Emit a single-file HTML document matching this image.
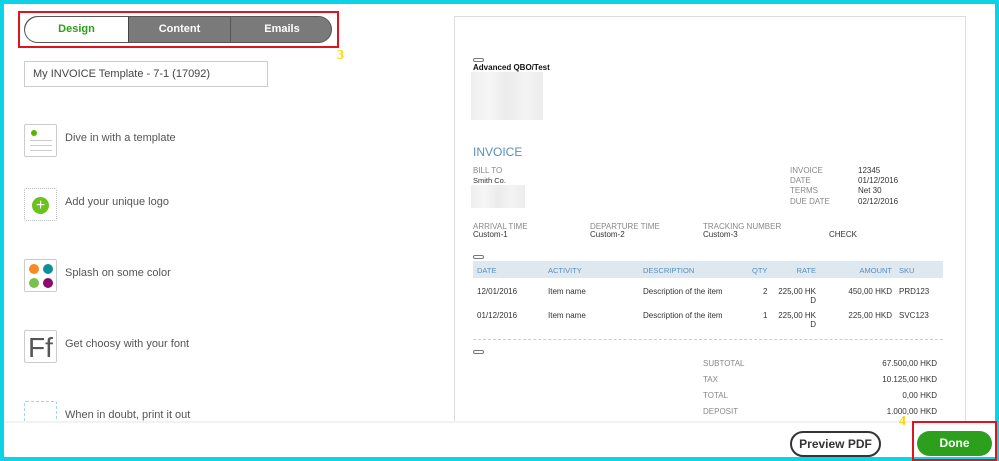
<!DOCTYPE html><html><head><style>
*{margin:0;padding:0;box-sizing:border-box}
body{width:999px;height:461px;position:relative;overflow:hidden;background:#fff;font-family:"Liberation Sans",sans-serif}
.a{position:absolute}
.cy{position:absolute;background:#0dd3e6}
.t{position:absolute;font-size:8px;color:#333;white-space:nowrap;line-height:9px}
.g{color:#888}
.h{position:absolute;font-size:7.5px;color:#5a8fb8;top:266px}
.li{position:absolute;left:65px;font-size:11px;color:#555}
.ic{position:absolute;left:24px;width:33px;height:33px;border:1px solid #ccc;border-radius:2px;background:#fff}
.blur{position:absolute;background:linear-gradient(90deg,#eee,#f6f6f6,#ebebeb,#f4f4f4,#ececec)}
.r{text-align:right}
</style></head><body>
<div class="cy" style="left:0;top:0;width:999px;height:4px"></div>
<div class="cy" style="left:0;top:0;width:4px;height:461px"></div>
<div class="cy" style="left:995px;top:0;width:4px;height:461px"></div>
<div class="cy" style="left:0;top:457px;width:999px;height:4px"></div>

<div class="a" style="left:18px;top:11px;width:321px;height:37px;border:2px solid #e0141e"></div>
<div class="a" style="left:24px;top:16px;width:308px;height:27px;border-radius:14px;border:1px solid #ccc;overflow:hidden;background:#7a7a7a;border-color:#555">
<div class="a" style="left:0;top:0;width:103px;height:27px;background:#fff;color:#2ca01c;font-size:11px;font-weight:bold;text-align:center;line-height:25px;border-radius:14px 0 0 14px">Design</div>
<div class="a" style="left:103px;top:0;width:103px;height:27px;color:#fff;font-size:11px;font-weight:bold;text-align:center;line-height:25px;border-left:1px solid #444;border-right:1px solid #555">Content</div>
<div class="a" style="left:206px;top:0;width:102px;height:27px;color:#fff;font-size:11px;font-weight:bold;text-align:center;line-height:25px">Emails</div>
</div>
<div class="a" style="left:337px;top:48px;color:#ffd400;font-weight:bold;font-size:14px;font-family:'Liberation Serif',serif">3</div>

<div class="a" style="left:24px;top:61px;width:244px;height:26px;border:1px solid #ccc;font-size:11px;color:#444;padding:6px 0 0 8px">My INVOICE Template - 7-1 (17092)</div>

<div class="ic" style="top:124px"><div class="a" style="left:6px;top:5px;width:6px;height:6px;border-radius:50%;background:#53b700"></div><div class="a" style="left:5px;top:15px;width:22px;border-top:1px solid #ccc"></div><div class="a" style="left:5px;top:20px;width:22px;border-top:1px solid #ccc"></div><div class="a" style="left:5px;top:25px;width:22px;border-top:1px solid #ccc"></div></div>
<div class="li" style="top:132px">Dive in with a template</div>
<div class="ic" style="top:188px;border:1px dotted #bbb"><div class="a" style="left:7px;top:8px;width:17px;height:17px;border-radius:50%;background:#6cc21c;color:#fff;font-size:16px;line-height:17px;text-align:center">+</div></div>
<div class="li" style="top:196px">Add your unique logo</div>
<div class="ic" style="top:259px"><div class="a" style="left:4px;top:4px;width:10px;height:10px;border-radius:50%;background:#f68b1f"></div><div class="a" style="left:18px;top:4px;width:10px;height:10px;border-radius:50%;background:#0f8f99"></div><div class="a" style="left:4px;top:18px;width:10px;height:10px;border-radius:50%;background:#7bbf4e"></div><div class="a" style="left:18px;top:18px;width:10px;height:10px;border-radius:50%;background:#8b0a6b"></div></div>
<div class="li" style="top:267px">Splash on some color</div>
<div class="ic" style="top:330px"><div class="a" style="left:3px;top:1px;font-size:28px;color:#555;font-family:'Liberation Sans';line-height:32px">Ff</div></div>
<div class="li" style="top:338px">Get choosy with your font</div>
<div class="ic" style="top:401px;border:1px dashed #9ed6ee;height:22px"></div>
<div class="li" style="top:409px">When in doubt, print it out</div>

<div class="a" style="left:454px;top:16px;width:512px;height:410px;border:1px solid #ddd"></div>
<div class="a" style="left:473px;top:58px;width:11px;height:4px;border:1px solid #777;border-radius:3px"></div>
<div class="t" style="left:473px;top:63px;font-weight:bold;color:#111">Advanced QBO/Test</div>
<div class="blur" style="left:471px;top:72px;width:72px;height:48px"></div>
<div class="a" style="left:473px;top:145px;font-size:12px;color:#5a8fb8">INVOICE</div>
<div class="t g" style="left:473px;top:166px">BILL TO</div>
<div class="t" style="left:473px;top:176px;font-size:7.5px">Smith Co.</div>
<div class="blur" style="left:471px;top:185px;width:54px;height:23px"></div>
<div class="t g" style="left:790px;top:166px">INVOICE</div><div class="t" style="left:858px;top:166px">12345</div>
<div class="t g" style="left:790px;top:176px">DATE</div><div class="t" style="left:858px;top:176px">01/12/2016</div>
<div class="t g" style="left:790px;top:186px">TERMS</div><div class="t" style="left:858px;top:186px">Net 30</div>
<div class="t g" style="left:790px;top:197px">DUE DATE</div><div class="t" style="left:858px;top:197px">02/12/2016</div>
<div class="t g" style="left:473px;top:222px">ARRIVAL TIME</div><div class="t" style="left:473px;top:230px">Custom-1</div>
<div class="t g" style="left:590px;top:222px">DEPARTURE TIME</div><div class="t" style="left:590px;top:230px">Custom-2</div>
<div class="t g" style="left:703px;top:222px">TRACKING NUMBER</div><div class="t" style="left:703px;top:230px">Custom-3</div>
<div class="t" style="left:829px;top:230px">CHECK</div>
<div class="a" style="left:473px;top:255px;width:11px;height:4px;border:1px solid #777;border-radius:3px"></div>
<div class="a" style="left:473px;top:261px;width:470px;height:17px;background:#dde8f1"></div>
<div class="h" style="left:477px">DATE</div><div class="h" style="left:548px">ACTIVITY</div><div class="h" style="left:643px">DESCRIPTION</div><div class="h" style="left:752px">QTY</div><div class="h" style="left:780px;width:36px;text-align:right">RATE</div><div class="h" style="left:840px;width:52px;text-align:right">AMOUNT</div><div class="h" style="left:899px">SKU</div>
<div class="t" style="left:477px;top:287px">12/01/2016</div><div class="t" style="left:548px;top:287px">Item name</div><div class="t" style="left:643px;top:287px">Description of the item</div><div class="t" style="left:763px;top:287px">2</div><div class="t r" style="left:770px;top:287px;width:46px">225,00 HK<br>D</div><div class="t r" style="left:820px;top:287px;width:72px">450,00 HKD</div><div class="t" style="left:899px;top:287px">PRD123</div>
<div class="t" style="left:477px;top:311px">01/12/2016</div><div class="t" style="left:548px;top:311px">Item name</div><div class="t" style="left:643px;top:311px">Description of the item</div><div class="t" style="left:763px;top:311px">1</div><div class="t r" style="left:770px;top:311px;width:46px">225,00 HK<br>D</div><div class="t r" style="left:820px;top:311px;width:72px">225,00 HKD</div><div class="t" style="left:899px;top:311px">SVC123</div>
<div class="a" style="left:473px;top:339px;width:470px;border-top:1px dashed #ccc"></div>
<div class="a" style="left:473px;top:350px;width:11px;height:4px;border:1px solid #777;border-radius:3px"></div>
<div class="t g" style="left:703px;top:359px">SUBTOTAL</div><div class="t r" style="left:837px;top:359px;width:100px">67.500,00 HKD</div>
<div class="t g" style="left:703px;top:375px">TAX</div><div class="t r" style="left:837px;top:375px;width:100px">10.125,00 HKD</div>
<div class="t g" style="left:703px;top:391px">TOTAL</div><div class="t r" style="left:837px;top:391px;width:100px">0,00 HKD</div>
<div class="t g" style="left:703px;top:407px">DEPOSIT</div><div class="t r" style="left:837px;top:407px;width:100px">1.000,00 HKD</div>

<div class="a" style="left:4px;top:421px;width:991px;height:36px;background:#fff;border-top:2px solid #f2f2f4"></div>
<div class="a" style="left:790px;top:431px;width:91px;height:26px;border:2px solid #333;border-radius:14px;font-size:12px;font-weight:bold;color:#333;text-align:center;line-height:23px">Preview PDF</div>
<div class="a" style="left:899px;top:414px;color:#ffd400;font-weight:bold;font-size:14px;font-family:'Liberation Serif',serif">4</div>
<div class="a" style="left:912px;top:421px;width:85px;height:40px;border:2px solid #e0141e"></div>
<div class="a" style="left:917px;top:431px;width:75px;height:25px;background:#2ca01c;border-radius:13px;font-size:12px;font-weight:bold;color:#fff;text-align:center;line-height:25px">Done</div>
</body></html>
